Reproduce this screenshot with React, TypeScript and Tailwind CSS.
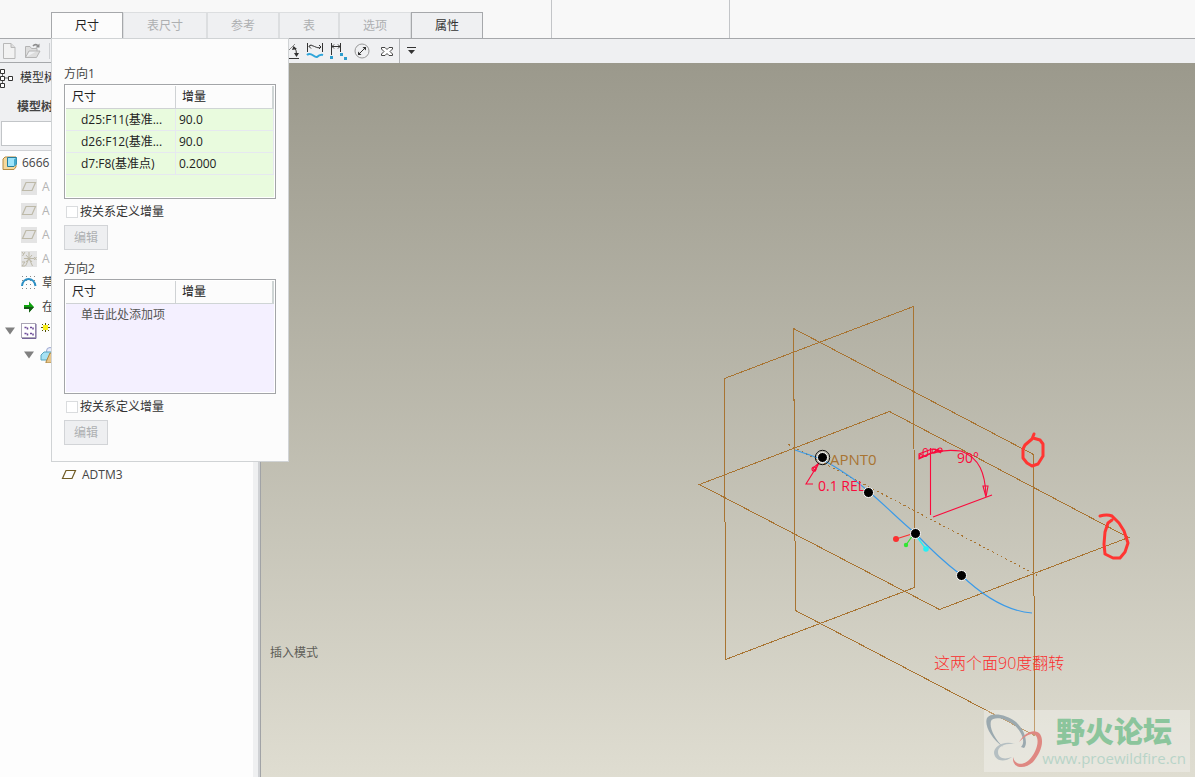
import React from 'react';

const tabs = [
  { label: '尺寸', state: 'active' },
  { label: '表尺寸', state: 'disabled' },
  { label: '参考', state: 'disabled' },
  { label: '表', state: 'disabled' },
  { label: '选项', state: 'disabled' },
  { label: '属性', state: 'enabled' },
];

const tabStyles: Record<string, string> = {
  active: 'bg-[#fcfcfc] border-[#a6a8ab] text-[#222222]',
  disabled: 'bg-[#eff0f2] border-[#dcdee0] text-[#adafb1]',
  enabled: 'bg-[#eff0f2] border-[#a6a8ab] text-[#333333]',
};

type Row = { name: string; value: string };

const directionOne: Row[] = [
  { name: 'd25:F11(基准...', value: '90.0' },
  { name: 'd26:F12(基准...', value: '90.0' },
  { name: 'd7:F8(基准点)', value: '0.2000' },
];

function DimensionSection({ id, title, rows }: { id: string; title: string; rows: Row[] }) {
  const filled = rows.length > 0;
  return (
    <section className="mb-[11px]">
      <h2 className="h-[18px] leading-4 text-[#444444]">{title}</h2>
      <div className="h-[115px] border border-[#a3a5a8] bg-white p-px">
        <div className={filled ? 'h-full bg-[#e9fbde]' : 'h-full bg-[#f4f0ff]'}>
          <table className="w-full table-fixed border-separate border-spacing-0 text-left text-[#222222]">
            <thead>
              <tr className="h-[23px] bg-[#fcfcfc]">
                <th className="w-[110px] border-r border-b border-[#cfd2d4] pl-1.5 font-normal">尺寸</th>
                <th className="border-r-2 border-b border-[#cfd5d5] pl-1.5 font-normal">增量</th>
              </tr>
            </thead>
            <tbody>
              {rows.map((row) => (
                <tr key={row.name} className="h-[22px]">
                  <td className="whitespace-nowrap border-r border-b border-[#e6e8f0] pl-[15px]">{row.name}</td>
                  <td className="border-r border-b border-[#e6e8f0] pl-[3px]">{row.value}</td>
                </tr>
              ))}
              {!filled && (
                <tr className="h-[22px] text-[#555555]">
                  <td colSpan={2} className="pl-[15px]">单击此处添加项</td>
                </tr>
              )}
            </tbody>
          </table>
        </div>
      </div>
      <div className="mt-[5px] flex h-4 items-center gap-0.5 pl-0.5 text-[#333333]">
        <input id={id} type="checkbox" className="h-3 w-3 appearance-none border border-[#dadcde] bg-white" />
        <label htmlFor={id}>按关系定义增量</label>
      </div>
      <button type="button" disabled className="mt-[5px] block h-[25px] w-11 border border-[#d2d4d7] bg-[#eeeff1] text-[#adafb1]">
        编辑
      </button>
    </section>
  );
}

function PlaneIcon({ muted = false }: { muted?: boolean }) {
  return (
    <svg width="16" height="16" viewBox="0 0 16 16" className={muted ? 'shrink-0 bg-[#e4e4e4]' : 'shrink-0'} aria-hidden="true">
      <path d="M5 3.500H14.500L11 11.500H1.500Z" fill="none" stroke={muted ? '#bdb9a8' : '#715c24'} strokeWidth="1.2" />
    </svg>
  );
}

function CsysIcon() {
  return (
    <svg width="16" height="16" viewBox="0 0 16 16" className="shrink-0 bg-[#e4e4e4]" aria-hidden="true">
      <path d="M8 1V7.500L4.500 15M8 7.500L11.500 15M3 7.500H13M5 4L11 11M11 4L5 11M1 1L2.500 3M4 1L1.500 5M13 6L15.500 9M15.500 6L13 9M1 11H4L1 15H4" fill="none" stroke="#bdb9a8" />
    </svg>
  );
}

function SketchIcon() {
  return (
    <svg width="16" height="16" viewBox="0 0 16 16" className="shrink-0" aria-hidden="true">
      <path d="M1 1.500H15M1 5.500H15M1 9.500H15M1 13.500H15" stroke="#888888" strokeDasharray="1 3" />
      <path d="M1 11C2 1.500 13 1.500 14.500 11" fill="none" stroke="#2c8fc4" strokeWidth="2" />
    </svg>
  );
}

function InsertIcon() {
  return (
    <svg width="16" height="16" viewBox="0 0 16 16" className="shrink-0" aria-hidden="true">
      <path d="M3 6H8V2.500L13 8L8 13.500V10H3Z" fill="#0ea50e" />
      <path d="M3 8H13L8 13.500V10H3Z" fill="#175917" />
    </svg>
  );
}

function PatternIcon() {
  return (
    <svg width="16" height="16" viewBox="0 0 16 16" className="shrink-0" aria-hidden="true">
      <rect x="0.5" y="0.5" width="14" height="14" fill="#ffffff" stroke="#aaa6b5" />
      <path d="M15 1V15.500H1" fill="none" stroke="#75639a" />
      <path d="M3.500 4.500H6.500V7M9 4.500H12V7M3.500 10.500H6.500V13M9 10.500H12V13" fill="none" stroke="#6c4a99" strokeWidth="1.5" strokeDasharray="2 1" />
    </svg>
  );
}

function GroupIcon() {
  return (
    <svg width="16" height="16" viewBox="0 0 16 16" className="shrink-0" aria-hidden="true">
      <circle cx="10" cy="4" r="3.500" fill="#e9ecfa" stroke="#9aa7d1" />
      <path d="M1 8L4 5H12V13H1Z" fill="#a6e1f3" stroke="#55a3bd" />
      <path d="M6 15L10 6L15 7V16H6Z" fill="#e7c68b" stroke="#a98541" />
    </svg>
  );
}

function PartIcon() {
  return (
    <svg width="16" height="16" viewBox="0 0 16 16" className="shrink-0" aria-hidden="true">
      <path d="M1 4L3 2H14V12L12 14.500H1Z" fill="#f5d99d" stroke="#b58b42" />
      <path d="M5.500 2.500H14.500V9L12 11.500H5.500Z" fill="#9de4fa" stroke="#277d9c" />
      <path d="M12 4.500L14.500 2.500V9L12 11.500Z" fill="#45a9cc" />
    </svg>
  );
}

function Expander() {
  return (
    <svg width="10" height="8" viewBox="0 0 10 8" className="shrink-0" aria-hidden="true">
      <path d="M0 0.500H10L5 7.500Z" fill="#808080" />
    </svg>
  );
}

function ModelTree() {
  return (
    <aside className="flex w-[261px] shrink-0 border-r border-[#a1a3a6]">
      <div className="flex min-w-0 flex-1 flex-col">
        <div className="h-[88px] shrink-0 border-b border-[#d0d2d5] bg-[#eff0f2] text-[#333333]">
          <div className="flex h-[30px] items-center gap-1.5">
            <svg width="14" height="20" viewBox="0 0 14 20" className="shrink-0" aria-hidden="true">
              <path d="M2.500 3V18M3 10H10" stroke="#666666" />
              <path d="M0.500 1.500H4.500V5.500H0.500ZM0.500 8.500H4.500V12.500H0.500ZM0.500 15.500H4.500V19.500H0.500ZM8.500 8.500H12.500V12.500H8.500Z" fill="#ffffff" stroke="#333333" />
            </svg>
            <span>模型树</span>
          </div>
          <div className="h-7 pl-[17px] leading-[28px] font-bold text-[#444444]">模型树</div>
          <input type="text" aria-label="模型树" className="ml-px block h-[25px] w-60 border border-[#c2c5c8] bg-white px-1" />
        </div>
        <ul className="flex-1 bg-[#fdfdfd] text-[#444444]">
          <li className="flex h-6 items-center gap-1 pl-0.5"><PartIcon /><span>6666</span></li>
          {[1, 2, 3].map((n) => (
            <li key={n} className="flex h-6 items-center gap-[5px] pl-[21px] text-[#b4b4b4]"><PlaneIcon muted /><span>A</span></li>
          ))}
          <li className="flex h-6 items-center gap-[5px] pl-[21px] text-[#b4b4b4]"><CsysIcon /><span>A</span></li>
          <li className="flex h-6 items-center gap-[5px] pl-[21px]"><SketchIcon /><span>草</span></li>
          <li className="flex h-6 items-center gap-[5px] pl-[21px]"><InsertIcon /><span>在</span></li>
          <li className="flex h-6 items-center gap-[5px] pl-[5px]">
            <Expander />
            <span className="flex items-center gap-1 pl-px">
              <PatternIcon />
              <svg width="9" height="16" viewBox="0 0 9 16" aria-hidden="true">
                <path d="M4.500 0V9M0 4.500H9M1 1L8 8M8 1L1 8" stroke="#555500" />
                <path d="M2 2H7V7H2Z" fill="#f8ef1c" />
              </svg>
            </span>
          </li>
          <li className="flex h-6 items-center gap-1.5 pl-6"><Expander /><GroupIcon /></li>
          <li className="mt-24 flex h-6 items-center gap-[5px] pl-[61px]"><PlaneIcon /><span>ADTM3</span></li>
        </ul>
      </div>
      <div className="w-[5px] bg-[#eff0f1]" />
      <div className="w-0.5 bg-[#cfd1d4]" />
    </aside>
  );
}

function PointMarker({ x, y, ring = false }: { x: number; y: number; ring?: boolean }) {
  return (
    <g>
      {ring && <circle cx={x} cy={y} r="7.200" fill="none" stroke="#111111" />}
      <circle cx={x} cy={y} r="5" fill="#000000" stroke="#ffffff" />
    </g>
  );
}

function Viewport() {
  return (
    <main className="relative min-w-0 flex-1 overflow-hidden bg-linear-to-b from-[#9b998c] to-[#dfddd1]">
      <svg viewBox="261 63 934 714" className="block h-full w-full" role="img" aria-label="APNT0">
        <g fill="none" stroke="#a87432" shapeRendering="crispEdges">
          <path d="M724.500 378.500L913.500 306.500L914.500 587.500L725.500 659.500Z" />
          <path d="M793.500 328.500L1033.500 454.500L1034.500 735.500L795.500 610.500Z" />
          <path d="M699.500 484.500L889.500 411.500L1128.500 537.500L939.500 609.500Z" />
          <path d="M788.500 444.500L1037.500 575.500" strokeDasharray="2 3" />
        </g>
        <path d="M795 450C812 456 822 458 840 470C855 479 860 484 868 491C884 504 899 520 915 533C932 551 944 562 961 575C982 595 1005 611 1032 613" fill="none" stroke="#3a9ae8" strokeWidth="1.1" />
        <text x="830" y="465" fill="#a87432" fontSize="15" className="font-['Open_Sans']">APNT0</text>
        <g fill="none" stroke="#fa0a3c" strokeWidth="1.1">
          <path d="M930.500 448V515M933 517L992 495" />
          <path d="M919 458L931 453Q945 449 961 451C980 458 985 474 986 495" />
          <path d="M983 486L986 497L988 486ZM919 454V459L932 453L943 451L932 449ZM935 449L941 453M938 449L933 453" />
          <circle cx="921" cy="456" r="1.500" />
          <circle cx="934" cy="451" r="2" />
          <circle cx="940" cy="450" r="2" />
          <path d="M819 463L806 484H813M819 463L813 468L815 471Z" />
          <circle cx="814" cy="469" r="2" />
        </g>
        <g fill="#fa0a3c" fontSize="14" className="font-['Open_Sans']">
          <text x="818" y="491">0.1 REL</text>
          <text x="957" y="463">90°</text>
          <text x="922" y="457" fontSize="12">0</text>
        </g>
        <path d="M915 533L896 539" stroke="#fb3030" strokeWidth="1.3" />
        <circle cx="896" cy="539" r="3" fill="#fb3030" />
        <path d="M913 535L906 545" stroke="#33e633" strokeWidth="1.3" />
        <circle cx="906" cy="545" r="2.200" fill="#33e633" />
        <path d="M917 537L926 549" stroke="#25eff5" strokeWidth="1.3" />
        <circle cx="926" cy="549" r="2.800" fill="#25eff5" />
        <PointMarker x={822.5} y={457.5} ring />
        <PointMarker x={868.5} y={492.5} />
        <PointMarker x={915.5} y={533.5} />
        <PointMarker x={961.5} y={575.5} />
        <g fill="none" stroke="#ff3532" strokeWidth="3" strokeLinecap="round" strokeLinejoin="round">
          <path d="M1034 434L1032 439L1025 445L1023 449V458L1027 463L1032 466L1038 464L1043 456V444L1040 440L1033 438" />
          <path d="M1100 516Q1107 514 1112 516L1119 523L1124 531L1128 543L1125 552L1120 558L1113 558L1105 554L1104 544L1105 532L1108 523L1112 520" />
        </g>
        <text x="934" y="669" fill="#fb2c2c" fontSize="16" className="font-['Open_Sans','Noto_Sans_CJK_SC',sans-serif] font-light">这两个面90度翻转</text>
      </svg>
      <p className="absolute bottom-[116px] left-[9px] leading-4 text-[#5e5e58]">插入模式</p>
      <div className="absolute right-[5px] bottom-[5px] flex h-[62px] w-[206px] bg-white/30">
        <svg width="60" height="62" viewBox="984 710 60 62" className="shrink-0" aria-hidden="true">
          <path fill="#9ba9af" d="M1003 747C991 738 984 725 987 718C991 712 1006 714 1016 722C1026 731 1028 744 1024 748L1021 747C1026 742 1022 731 1013 724C1003 717 993 717 991 721C989 728 995 739 1003 747Z" />
          <path fill="#b5bfc2" d="M1015 744C1003 740 994 747 994 753C995 761 1004 763 1012 757C1004 760 998 758 998 752C998 746 1006 743 1015 744Z" />
          <path fill="#df8882" d="M1019 742C1025 732 1035 728 1040 734C1045 742 1040 754 1033 762C1026 769 1012 770 1013 757C1015 766 1024 765 1029 760C1036 753 1040 741 1036 736C1032 731 1025 736 1019 742Z" />
        </svg>
        <div className="flex min-w-0 flex-1 flex-col items-end pr-1 whitespace-nowrap">
          <strong className="mr-3.5 h-10 font-['Noto_Sans_CJK_SC',sans-serif] text-[29px] leading-10 font-black text-[#8bc59c]">野火论坛</strong>
          <span className="font-['Open_Sans'] text-[15px] leading-4 text-[#b8d4c8]">www.proewildfire.cn</span>
        </div>
      </div>
    </main>
  );
}

function ToolbarIcons() {
  return (
    <div className="flex items-center text-[#333333]">
      <button type="button" aria-label="角度" className="w-[11px]">
        <svg width="11" height="16" viewBox="0 0 11 16">
          <path d="M0 7L6 1" fill="none" stroke="#888888" />
          <path d="M0 15.500H10M5 4Q8 7 7.500 13" fill="none" stroke="currentColor" />
          <path d="M3 7L4.500 3L8 6ZM5 10L7.500 14L10 10Z" fill="currentColor" />
        </svg>
      </button>
      <button type="button" aria-label="曲线" className="ml-1.5">
        <svg width="18" height="16" viewBox="0 0 18 16">
          <path d="M1.500 0V9M16.500 0V9M3 3.500C6 0 11 7 15 4M5 1.500L3 3.500L5 5.500M13 2L15 4L13 6" fill="none" stroke="currentColor" />
          <path d="M1 12C5 8 8 15 11 14Q14 11 17 12" fill="none" stroke="#2ea5da" strokeWidth="2" />
        </svg>
      </button>
      <button type="button" aria-label="点" className="ml-1.5">
        <svg width="18" height="17" viewBox="0 0 18 17">
          <path d="M1.500 0V12M10.500 0V9M2 3.500H10M4 1.500L2 3.500L4 5.500M8 1.500L10 3.500L8 5.500" fill="none" stroke="currentColor" />
          <path d="M1.500 13V16M11.500 10V13M15.500 14V17" stroke="#2e9dcd" strokeWidth="3" />
        </svg>
      </button>
      <button type="button" aria-label="直径" className="ml-1.5">
        <svg width="16" height="16" viewBox="0 0 16 16">
          <circle cx="8" cy="8" r="7" fill="none" stroke="#999999" />
          <path d="M4.500 11.500L11.500 4.500" stroke="currentColor" />
          <path d="M4 8.500V12H7.500ZM8.500 4H12V7.500Z" fill="currentColor" />
        </svg>
      </button>
      <button type="button" aria-label="关闭" className="ml-[11px]">
        <svg width="12" height="16" viewBox="0 0 12 16">
          <path d="M0.500 4.500H4L6 6.500L8 4.500H11.500V6L9 8.500L11.500 11V12.500H8L6 10.500L4 12.500H0.500V11L3 8.500L0.500 6Z" fill="#ffffff" stroke="#444444" />
        </svg>
      </button>
      <div className="ml-1.5 h-6 w-px bg-[#b2b4b7]" />
      <button type="button" aria-label="更多" className="ml-[7px]">
        <svg width="9" height="8" viewBox="0 0 9 8">
          <path d="M0 0.500H9" stroke="currentColor" />
          <path d="M1 3H8L4.500 7Z" fill="currentColor" />
        </svg>
      </button>
    </div>
  );
}

export default function App() {
  return (
    <div className="flex h-screen min-h-[480px] flex-col overflow-hidden bg-[#f8f8f8] font-['Open_Sans','Noto_Sans_CJK_SC',sans-serif] text-xs">
      <header className="flex h-[39px] shrink-0 border-b border-[#a6a8ab]">
        <div className="relative ml-[51px] flex w-[500px] items-end">
          <nav className="flex">
            {tabs.map((tab) => (
              <button
                key={tab.label}
                type="button"
                disabled={tab.state === 'disabled'}
                className={`h-[26px] border border-b-0 px-[23px] ${tabStyles[tab.state]}`}
              >
                {tab.label}
              </button>
            ))}
          </nav>
          <div className="absolute top-full left-0 z-10 w-[238px] border border-[#d0d3d5] bg-[#fcfcfc] px-3 pt-[27px] pb-[5px]">
            <DimensionSection id="relation-1" title="方向1" rows={directionOne} />
            <DimensionSection id="relation-2" title="方向2" rows={[]} />
          </div>
        </div>
        <div className="w-[179px] border-x border-[#c3c5c8]" />
      </header>
      <div className="flex h-6 shrink-0 bg-[#eff0f2]">
        <div className="flex w-[289px] items-center gap-2 border-b border-[#a6a8ab] pl-0.5">
          <button type="button" aria-label="新建">
            <svg width="14" height="16" viewBox="0 0 14 16">
              <path d="M1.500 0.500H9L13 4.500V15.500H1.500Z" fill="#f2f2f2" stroke="#b8b8b8" />
              <path d="M9 0.500V4.500H13" fill="#dddddd" stroke="#b8b8b8" />
            </svg>
          </button>
          <button type="button" aria-label="打开">
            <svg width="17" height="16" viewBox="0 0 17 16">
              <path d="M1.500 14.500V3.500H6L7.500 5.500H13V8H5L1.500 14.500H12.500L16 8H13" fill="#dddddd" stroke="#b4b4b4" />
              <path d="M9 3Q11 0.500 14 2.500" fill="none" stroke="#8c8c8c" strokeWidth="1.5" />
              <path d="M15.500 0.500V4.500H11.500Z" fill="#8c8c8c" />
            </svg>
          </button>
          <div className="h-4 w-px bg-[#cfd1d4]" />
        </div>
        <ToolbarIcons />
      </div>
      <div className="flex min-h-0 flex-1">
        <ModelTree />
        <Viewport />
      </div>
    </div>
  );
}
